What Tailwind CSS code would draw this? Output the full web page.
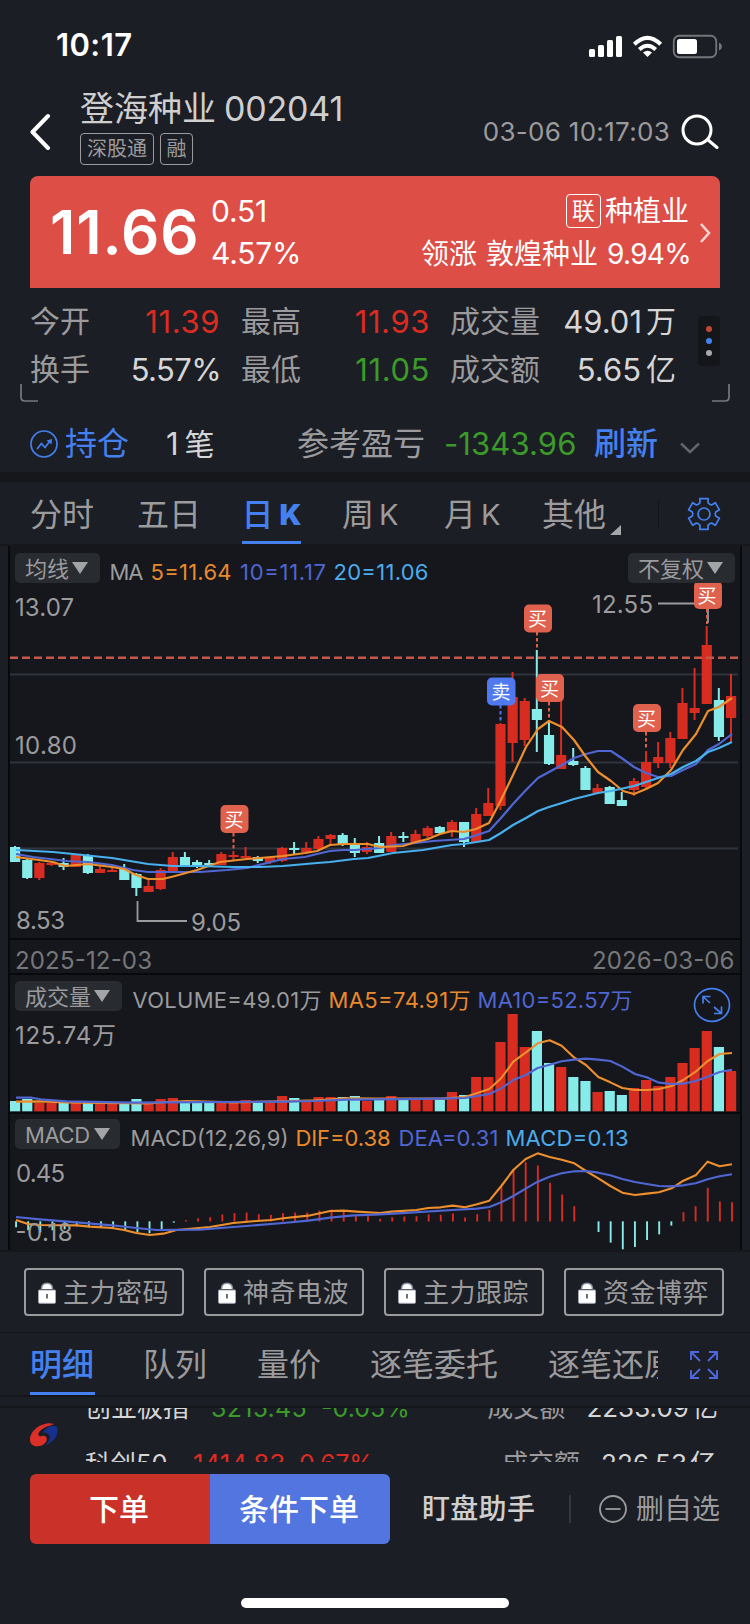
<!DOCTYPE html>
<html lang="zh-CN">
<head>
<meta charset="utf-8">
<title>登海种业 002041</title>
<script src="https://cdn.jsdelivr.net/npm/@tailwindcss/browser@4"></script>
</head>
<body class="bg-[#1b1e25]">
<div class="w-[750px] h-[1624px] overflow-hidden flex flex-col bg-[#1b1e25] text-[#9b9b9d] font-['Inter','Noto_Sans_CJK_SC',sans-serif] whitespace-nowrap leading-none">

  <!-- status bar -->
  <div class="h-[88px] shrink-0 flex items-center pl-[56px] pr-[28px] pt-[3px]">
    <span class="-mt-[2px] text-[31px] font-semibold text-white tracking-[0.4px]">10:17</span>
    <svg class="ml-auto" width="136" height="26" viewBox="586 32 136 26">
      <g fill="#fff">
        <rect x="589" y="48" width="6" height="8" rx="1.5"/><rect x="598" y="44" width="6" height="12" rx="1.5"/><rect x="607" y="39" width="6" height="17" rx="1.5"/><rect x="616" y="35" width="6" height="21" rx="1.5"/>
        <path d="M647.500 56 L643 51.500 Q647.500 47.800 652 51.500 Z"/>
      </g>
      <g fill="none" stroke="#fff" stroke-width="4">
        <path d="M639.300 48.500 Q647.500 41 655.700 48.500"/><path d="M634.300 43.300 Q647.500 30.500 660.700 43.300"/>
      </g>
      <rect x="673.750" y="34.750" width="42.500" height="21.500" rx="5.500" fill="none" stroke="#74767a" stroke-width="1.800"/>
      <rect x="677" y="38" width="20" height="15" rx="2.500" fill="#fff"/>
      <path d="M719 41.500 Q722 43 722 45.500 Q722 48 719 49.500 Z" fill="#74767a"/>
    </svg>
  </div>

  <!-- header -->
  <div class="h-[88px] shrink-0 flex pl-[30px] pr-[31px]">
    <svg class="mt-[24px]" width="24" height="40" viewBox="0 0 24 40"><path d="M18 4 L2.500 20 L18 36" fill="none" stroke="#fff" stroke-width="4" stroke-linecap="round" stroke-linejoin="round"/></svg>
    <div class="ml-[26px] flex flex-col">
      <div class="mt-[1px] text-[34px] leading-[40px] text-[#cfcfd0] flex gap-[8px]">登海种业<span class="tracking-[-0.2px]">002041</span></div>
      <div class="mt-[4px] flex gap-[6px] text-[20px]">
        <span class="h-[32px] w-[74px] border border-[#9b9b9d] rounded-[4px] flex items-center justify-center">深股通</span>
        <span class="h-[32px] w-[33px] border border-[#9b9b9d] rounded-[4px] flex items-center justify-center">融</span>
      </div>
    </div>
    <div class="ml-auto mt-[26px] h-[36px] flex gap-[11px]">
      <span class="text-[26px] leading-[36px] tracking-[0.3px]">03-06 10:17:03</span>
      <svg width="38" height="36" viewBox="681 114 38 36"><g fill="none" stroke="#fff" stroke-width="3" stroke-linecap="round"><circle cx="697" cy="130" r="14"/><path d="M707.500 139.500 L717 147.500"/></g></svg>
    </div>
  </div>

  <!-- price card -->
  <div class="mx-[30px] h-[112px] shrink-0 rounded-t-[8px] bg-[#dd4e47] text-white flex">
    <div class="w-[160px] ml-[20px] text-[60px] font-semibold leading-[112px] tracking-[0.9px]">11.66</div>
    <div class="ml-[1px] pt-[14px] text-[30px] leading-[42px] tracking-[-0.2px]">
      <div>0.51</div><div>4.57%</div>
    </div>
    <div class="ml-auto pt-[14px] flex flex-col items-end text-[28px] leading-[42px]">
      <div class="flex items-center gap-[4px] mr-[2px]"><span class="w-[35px] h-[34px] border border-white rounded-[4px] text-[23px] flex items-center justify-center">联</span>种植业</div>
      <div class="mt-[1px] flex gap-[9px]"><span>领涨</span><span>敦煌种业</span><span class="tracking-[-0.7px]">9.94%</span></div>
    </div>
    <svg class="ml-[8px] mr-[9px] mt-[46px]" width="12" height="22" viewBox="0 0 12 22"><path d="M2 2 L10 11 L2 20" fill="none" stroke="#f6d5d3" stroke-width="2.500"/></svg>
  </div>

  <!-- key figures -->
  <div class="h-[116px] shrink-0 flex px-[20px]">
    <svg class="mt-[95px]" width="18" height="20" viewBox="0 0 18 20"><path d="M1 1 V14 Q1 18 5 18 H18" fill="none" stroke="#77787b" stroke-width="1.700"/></svg>
    <div class="-ml-[8px] mt-[9px] w-[646px] grid grid-cols-[60px_130px_21px_60px_129px_20px_91px_135px] auto-rows-[48px] items-center text-[30px]">
      <span>今开</span><span class="text-right text-[31px] tracking-[0.6px] text-[#dc2c22]">11.39</span><i></i><span>最高</span><span class="text-right text-[31px] tracking-[0.6px] text-[#dc2c22]">11.93</span><i></i><span>成交量</span><span class="flex justify-end gap-[4px] text-[#d6d6d7]"><b class="font-normal text-[31px]">49.01</b>万</span>
      <span>换手</span><span class="-mr-[1px] text-right text-[31px] tracking-[-0.6px] text-[#d6d6d7]">5.57%</span><i></i><span>最低</span><span class="text-right text-[31px] tracking-[0.6px] text-[#3c9a2a]">11.05</span><i></i><span>成交额</span><span class="flex justify-end gap-[5px] text-[#d6d6d7]"><b class="font-normal text-[31px]">5.65</b>亿</span>
    </div>
    <div class="ml-[22px] mt-[28px] w-[22px] h-[50px] rounded-[4px] bg-[#15161a] flex flex-col items-center justify-center gap-[6px]">
      <i class="size-[6px] rounded-full bg-[#bf4937]"></i><i class="size-[6px] rounded-full bg-[#4480ef]"></i><i class="size-[6px] rounded-full bg-[#a9a9ad]"></i>
    </div>
    <svg class="-ml-[8px] mt-[95px]" width="18" height="20" viewBox="0 0 18 20"><path d="M17 1 V14 Q17 18 13 18 H0" fill="none" stroke="#77787b" stroke-width="1.700"/></svg>
  </div>

  <!-- holdings -->
  <div class="h-[68px] shrink-0 flex items-center pl-[30px] pt-[12px] text-[32px] leading-[44px]">
    <svg width="28" height="28" viewBox="0 0 28 28" class="mt-[-1px]"><g fill="none" stroke="#4480ef" stroke-width="1.700"><circle cx="14" cy="14" r="13"/><path d="M7 19 L11.500 13.500 L15 17.500 L20 11"/></g><path d="M16.500 10.500 L22 9 L21.500 14.500 Z" fill="#4480ef"/></svg>
    <span class="ml-[7px] w-[101px] text-[#4480ef]">持仓</span>
    <span class="w-[131px] text-[30px] text-[#d6d6d7] flex gap-[6px]"><b class="font-normal text-[31px]">1</b><b class="font-normal">笔</b></span>
    <span class="w-[147px]">参考盈亏</span>
    <span class="w-[150px] text-[31px] tracking-[0.1px] text-[#3c9a2a]">-1343.96</span>
    <span class="w-[86px] font-medium text-[#4480ef]">刷新</span>
    <svg class="mt-[8px]" width="20" height="12" viewBox="0 0 20 12"><path d="M1 1.500 L10 10 L19 1.500" fill="none" stroke="#626468" stroke-width="2.500"/></svg>
  </div>
  <div class="h-[10px] shrink-0 bg-[#15171b]"></div>

  <!-- period tabs -->
  <div class="h-[62px] shrink-0 flex items-stretch pl-[30px] text-[32px] leading-[65px]">
    <span class="w-[107px]">分时</span>
    <span class="w-[105px]">五日</span>
    <span class="w-[59px] mr-[41px] border-b-3 border-[#4480ef] flex justify-center gap-[6px] font-bold text-[#4480ef]"><b class="font-medium">日</b><b class="text-[29px]">K</b></span>
    <span class="w-[102px] flex gap-[5px]"><b class="font-normal">周</b><b class="font-normal text-[29px]">K</b></span>
    <span class="w-[98px] flex gap-[5px]"><b class="font-normal">月</b><b class="font-normal text-[29px]">K</b></span>
    <span class="w-[68px]">其他</span>
    <svg class="mt-[43px]" width="11" height="10" viewBox="0 0 11 10"><path d="M0 10 H11 V0 Z" fill="#a6a7a9"/></svg>
    <i class="ml-[37px] mt-[18px] w-px h-[28px] bg-[#121418]"></i>
    <svg class="ml-[28px] mt-[15px]" width="34" height="34" viewBox="-17 -17 34 34"><g fill="none" stroke="#4480ef" stroke-width="1.700" stroke-linejoin="round"><circle r="6"/><path id="gear"/></g></svg>
  </div>
  <div class="h-[2px] shrink-0 bg-[#15171b]"></div>

  <!-- charts -->
  <div class="h-[704px] shrink-0 mx-[8px] border-x-2 border-[#08090c] bg-[#15171c] flex flex-col">
    <div class="h-[37px] shrink-0 flex pl-[5px] pr-[5px] pt-[7px]">
      <div class="w-[85px] h-[30px] rounded-[5px] bg-[#282b30] flex items-center pl-[10px] pt-[1px] gap-[3px] text-[22px]">均线<svg class="-mt-[1px]" width="16" height="12"><path d="M0 0 H16 L8 12 Z" fill="#a3a4a6"/></svg></div>
      <svg width="420" height="30" viewBox="100 553 420 30" font-size="22">
        <text x="109.500" y="580" fill="#9b9b9d" textLength="34">MA</text>
        <text x="150.500" y="580" fill="#ea8a2d" textLength="81">5=11.64</text>
        <text x="240" y="580" fill="#5066d2" textLength="86">10=11.17</text>
        <text x="333.500" y="580" fill="#4cabec" textLength="95">20=11.06</text>
      </svg>
      <div class="ml-auto w-[107px] h-[30px] rounded-[5px] bg-[#282b30] flex items-center pl-[10px] pt-[1px] gap-[3px] text-[22px]">不复权<svg class="-mt-[1px]" width="16" height="12"><path d="M0 0 H16 L8 12 Z" fill="#a3a4a6"/></svg></div>
    </div>
    <svg class="shrink-0" width="730" height="355" viewBox="10 583 730 355" fill="none" font-size="24">
      <path d="M10 674.500 H738 M10 762.500 H738 M10 848.500 H738" stroke="#30343c" stroke-width="2"/>
      <g fill="#9b9b9d">
        <text x="15" y="615.500" textLength="59">13.07</text><text x="15" y="753.500" textLength="62">10.80</text><text x="16" y="928.500" textLength="49">8.53</text>
        <text x="592" y="612.500" textLength="61">12.55</text><text x="191" y="930.500" textLength="50">9.05</text>
      </g>
      <path d="M658 603.500 H708 V623 M137.500 901 V921 H187" stroke="#9b9b9d" stroke-width="1.800"/>
      <g id="candles"></g>
      <path d="M10 657.700 H738" stroke="#c4594b" stroke-width="2.400" stroke-dasharray="8 4"/>
      <g stroke-width="2.200" stroke-linejoin="round">
        <polyline stroke="#5066d2" points="16,854 33,857 67,861 88,862 112,865 133,870 148,872 200,872 227,870 247,868 267,863 283,859 305,857 317,854 330,851 343,850 355,850 380,848 393,845 416,843 433,841 464,839 477,835 489,831 501,818 513,804 526,790 538,778 549,772 562,765 574,758 586,754 598,751 611,751 623,759 634,767 646,773 658,777 671,776 683,770 696,764 708,750 719,744 732,734"/>
        <polyline stroke="#ee8f2d" points="16,857 39,860 53,862 65,866 88,864 112,867 124,869 136,875 148,879 163,879 175,876 197,870 220,862 247,859 260,858 283,856 305,853 317,851 330,845 343,844 368,844 380,847 403,846 416,842 428,839 440,834 452,831 464,832 476,829 489,823 501,800 513,775 526,747 538,729 549,721 562,727 574,740 586,757 598,772 611,781 623,791 634,794 646,789 658,783 671,770 683,750 696,734 708,711 719,707 732,698"/>
        <polyline stroke="#48b0ee" points="16,850 53,852 83,855 112,858 136,862 148,864 173,866 200,866 233,867 260,867 283,866 317,863 330,862 354,859 368,858 393,853 423,850 452,845 464,844 489,840 501,833 513,825 526,818 538,811 549,807 562,803 574,799 586,796 598,793 611,791 634,786 646,782 658,778 671,774 683,767 696,761 708,752 719,748 732,742"/>
      </g>
      <g stroke="#df614c" stroke-width="2" stroke-dasharray="3.500 2.500"><path d="M233.500 833 V850 M537 632 V648 M549 702 V718 M646 732 V750 M707 609 V624"/><path d="M500.500 705 V722" stroke="#4f78ee"/></g>
      <g fill="#e0614d"><rect x="220.500" y="805" width="28" height="28" rx="5"/><rect x="524" y="604.500" width="28" height="28" rx="5"/><rect x="536" y="674" width="28" height="28" rx="5"/><rect x="633" y="704" width="28" height="28" rx="5"/><rect x="694" y="581" width="28" height="28" rx="5"/></g>
      <rect x="487" y="677.500" width="28.500" height="28" rx="5" fill="#5079f0"/>
      <g fill="#fff" font-size="19" text-anchor="middle"><text x="234" y="826.500">买</text><text x="537.500" y="626">买</text><text x="549.500" y="695.500">买</text><text x="646.500" y="725.500">买</text><text x="707" y="602.500">买</text><text x="501" y="699">卖</text></g>
    </svg>
    <div class="h-[37px] shrink-0 border-y-2 border-[#08090c] flex justify-between items-center px-[5px] pr-[3px]">
      <svg class="w-full" height="33" viewBox="15 940 722 33" font-size="24" fill="#75777a"><text x="15" y="969" textLength="137">2025-12-03</text><text x="592" y="969" textLength="142.500">2026-03-06</text></svg>
    </div>

    <div class="h-[37px] shrink-0 relative flex pl-[5px] pt-[6px]">
      <div class="w-[107px] h-[30px] rounded-[5px] bg-[#282b30] flex items-center pl-[10px] pt-[1px] gap-[3px] text-[22px]">成交量<svg class="-mt-[1px]" width="16" height="12"><path d="M0 0 H16 L8 12 Z" fill="#a3a4a6"/></svg></div>
      <svg width="520" height="32" viewBox="122 981 520 32" font-size="22">
        <text x="132.500" y="1007.500" fill="#9b9b9d" textLength="189">VOLUME=49.01万</text>
        <text x="328.500" y="1007.500" fill="#ea8a2d" textLength="142">MA5=74.91万</text>
        <text x="477.500" y="1007.500" fill="#5066d2" textLength="155">MA10=52.57万</text>
      </svg>
      <svg class="absolute left-[683px] top-[12px]" width="38" height="36" viewBox="-19 -18 38 36"><g fill="none" stroke="#4480ef" stroke-width="1.700"><ellipse rx="17.500" ry="16.300"/><path d="M-2 -2 L-8.500 -8 M-9 -1.500 V-8.500 H-1.500 M2 2 L9 8 M2 8.500 H9.500 V1.500"/></g></svg>
    </div>
    <svg class="shrink-0" width="730" height="100" viewBox="10 1012 730 100" fill="none">
      <text x="15" y="1044" fill="#9b9b9d" font-size="24" textLength="101">125.74万</text>
      <g id="volumes"></g>
      <g transform="translate(0 960) scale(.33333)" stroke-width="6.300" stroke-linejoin="round">
        <polyline stroke="#ee8f2d" points="48,425 120,424 200,427 300,429 445,430 500,426 560,423 700,427 850,424 950,421 1040,415 1125,416 1325,416 1395,411 1430,400 1468,387 1504,354 1540,305 1577,278 1613,250 1649,241 1685,257 1723,293 1758,315 1795,351 1831,367 1867,384 1905,390 1940,390 1977,387 2015,378 2050,360 2087,335 2123,303 2159,282 2196,279"/>
        <polyline stroke="#5066d2" points="48,413 95,413 130,419 200,424 400,428 500,427 850,425 950,423 1040,419 1125,418 1325,416 1395,414 1468,402 1504,385 1540,360 1577,345 1613,324 1649,314 1685,304 1723,299 1758,296 1795,299 1831,303 1867,320 1905,342 1940,352 1977,368 2015,372 2050,371 2087,363 2123,350 2159,336 2196,329"/>
      </g>
    </svg>
    <div class="h-[38px] shrink-0 border-t-2 border-[#08090c] flex pl-[5px] pt-[5px]">
      <div class="w-[105px] mr-[1px] h-[30px] rounded-[5px] bg-[#282b30] flex items-center pl-[10px] pt-[1px] gap-[4px] text-[22px] tracking-[-0.4px]">MACD<svg class="-mt-[1px]" width="16" height="12"><path d="M0 0 H16 L8 12 Z" fill="#a3a4a6"/></svg></div>
      <svg width="520" height="31" viewBox="121 1119 520 31" font-size="22">
        <text x="130.500" y="1145.500" fill="#9b9b9d" textLength="158">MACD(12,26,9)</text>
        <text x="295.500" y="1145.500" fill="#ea8a2d" textLength="95">DIF=0.38</text>
        <text x="398.500" y="1145.500" fill="#5066d2" textLength="100">DEA=0.31</text>
        <text x="505.500" y="1145.500" fill="#4cabec" textLength="123">MACD=0.13</text>
      </svg>
    </div>
    <svg class="shrink-0" width="730" height="100" viewBox="10 1150 730 100" fill="none">
      <g id="macd"></g>
      <g transform="translate(0 960) scale(.33333)" stroke-width="6.300" stroke-linejoin="round">
        <polyline stroke="#ee8f2d" points="48,780 84,792 120,795 230,796 270,800 336,804 372,810 409,819 450,825 490,821 530,810 630,801 700,789 770,783 815,780 850,775 925,767 991,753 1030,752 1070,755 1140,759 1175,755 1249,750 1285,744 1322,742 1358,737 1395,742 1431,733 1468,722 1504,678 1540,630 1577,597 1613,580 1649,591 1685,599 1723,610 1758,633 1795,655 1831,678 1867,698 1905,705 1940,701 1977,697 2015,685 2050,662 2087,646 2123,605 2159,619 2196,613"/>
        <polyline stroke="#5066d2" points="48,771 120,778 230,787 336,796 409,804 470,810 600,809 700,801 850,789 925,782 991,773 1060,766 1125,764 1195,760 1358,750 1431,746 1468,741 1504,727 1540,708 1577,686 1613,665 1649,650 1685,640 1723,634 1758,633 1795,638 1831,646 1867,657 1905,666 1940,672 1977,678 2015,679 2050,676 2087,670 2123,658 2159,649 2196,643"/>
      </g>
      <g fill="#9b9b9d" font-size="24"><text x="16" y="1181.500" textLength="49">0.45</text><text x="15.500" y="1240.500" textLength="57">-0.18</text></g>
    </svg>
  </div>
  <div class="h-[2px] shrink-0 bg-[#15171b]"></div>

  <!-- locked indicators -->
  <div class="h-[81px] shrink-0 flex gap-[20px] px-[24px] pt-[16px] text-[26px] tracking-[0.5px] border-b border-[#121418]">
    <div class="w-[160px] h-[48px] border-2 border-[#9b9b9d] rounded-[4px] flex items-center pl-[12px] pt-[1px] gap-[7px]"><svg width="18" height="22" viewBox="0 0 18 22"><use href="#lock"/></svg>主力密码</div>
    <div class="w-[160px] h-[48px] border-2 border-[#9b9b9d] rounded-[4px] flex items-center pl-[12px] pt-[1px] gap-[7px]"><svg width="18" height="22" viewBox="0 0 18 22"><use href="#lock"/></svg>神奇电波</div>
    <div class="w-[160px] h-[48px] border-2 border-[#9b9b9d] rounded-[4px] flex items-center pl-[12px] pt-[1px] gap-[7px]"><svg width="18" height="22" viewBox="0 0 18 22"><use href="#lock"/></svg>主力跟踪</div>
    <div class="w-[160px] h-[48px] border-2 border-[#9b9b9d] rounded-[4px] flex items-center pl-[12px] pt-[1px] gap-[7px]"><svg width="18" height="22" viewBox="0 0 18 22"><g id="lock"><path d="M3.500 7 C3.500 3 6 1.200 9 1.200 C12 1.200 14.500 3 14.500 7" fill="#fff" stroke="#8d90a0" stroke-width="1.500"/><rect x="0.500" y="8" width="17" height="13.300" rx="1" fill="#fff" stroke="#a5a7b3"/><rect x="8" y="12" width="2" height="4.500" fill="#6b6e7c"/></g></svg>资金博弈</div>
  </div>

  <!-- detail tabs -->
  <div class="h-[62px] shrink-0 flex pl-[30px] text-[32px] leading-[63px]">
    <span class="w-[65px] mr-[48px] border-b-3 border-[#4480ef] font-medium text-[#4480ef]">明细</span>
    <span class="w-[114px]">队列</span>
    <span class="w-[113px]">量价</span>
    <span class="w-[178px]">逐笔委托</span>
    <span class="w-[110px] overflow-hidden">逐笔还原</span>
    <svg class="ml-[31px] mt-[17px]" width="30" height="30" viewBox="0 0 30 30"><path d="M11 11 L2 2 M2 10 V2 H10 M19 11 L28 2 M20 2 H28 V10 M11 19 L2 28 M2 20 V28 H10 M19 19 L28 28 M20 28 H28 V20" fill="none" stroke="#4f68dd" stroke-width="1.900"/></svg>
  </div>
  <div class="h-[13px] shrink-0 border-y-2 border-[#14161a]"></div>

  <!-- index ticker -->
  <div class="h-[54px] shrink-0 overflow-hidden flex text-[26px]">
    <svg class="ml-[29px] mt-[14px]" width="30" height="26" viewBox="0 0 30 26"><path d="M25 2 C17 -1 1 6 1 18 C1 26 13 26 17 20 C19 16 17 13 13 14 C9 15 8 12 11 9 C15 5 20 4 25 2 Z" fill="#dc2f28"/><path d="M14 11 C17 5 24 2 28 5 C31 12 24 22 14 24 C19 22 22 17 20 13 C19 11 16 10 14 11 Z" fill="#16308d"/></svg>
    <div class="ml-[26px] w-[633px] -mt-[28px]">
      <div class="h-[56px] flex items-center"><span class="w-[126px] text-[#d6d6d7]">创业板指</span><span class="w-[110px] text-[25px] tracking-[0.3px] text-[#3c9a2a]">3215.45</span><span class="text-[25px] text-[#3c9a2a]">-0.05%</span><span class="ml-auto mr-[21px]">成交额</span><span class="flex gap-[3px] text-[#d6d6d7]">2233.09<b class="font-normal">亿</b></span></div>
      <div class="h-[56px] flex items-center pr-[2px]"><span class="w-[108px] text-[25.500px] text-[#d6d6d7]">科创50</span><span class="w-[106px] text-[#dc2c22]">1414.83</span><span class="text-[25px] tracking-[-0.3px] text-[#dc2c22]">0.67%</span><span class="ml-auto mr-[21px]">成交额</span><span class="flex gap-[3px] text-[#d6d6d7]">226.53<b class="font-normal">亿</b></span></div>
    </div>
  </div>

  <!-- actions -->
  <div class="h-[82px] shrink-0 pt-[12px] flex pl-[30px] text-[30px] font-medium leading-[70px]">
    <div class="w-[180px] pr-[2px] rounded-l-[6px] bg-[#ca3229] text-white text-center">下单</div>
    <div class="w-[180px] pr-[2px] rounded-r-[6px] bg-[#5275e0] text-white text-center">条件下单</div>
    <span class="ml-[32px] w-[147px] text-[28px] tracking-[0.3px] text-[#cfcfd0]">盯盘助手</span>
    <i class="mt-[21px] w-[2px] h-[28px] bg-[#34373e]"></i>
    <svg class="ml-[28px] mt-[21px]" width="28" height="28" viewBox="0 0 28 28"><g fill="none" stroke="#9b9b9d" stroke-width="1.800"><circle cx="14" cy="14" r="13"/><path d="M6.500 14 H21.500"/></g></svg>
    <span class="ml-[9px] text-[28px] font-normal">删自选</span>
  </div>
  <div class="mt-[54px] mx-auto w-[268px] h-[10px] shrink-0 rounded-full bg-white"></div>
</div>

<script>
const RED = '#d82c20', CYAN = '#87ebe9';
// side, wick top, body top, body bottom, wick bottom
const candles = `c 846 847 862 862|c 859 860 878 879|r 862 863 878 880|r 861 863 865 866|c 858 863 867 870|r 855 855 867 867|c 854 856 873 874|r 865 869 873 873|r 867 870 872 872|c 864 868 880 880|c 873 874 888 896|r 880 886 892 892|r 868 870 889 890|r 852 857 871 871|c 852 857 865 866|c 860 862 865 868|c 860 863 865 866|r 852 854 865 865|r 851 855 857 861|r 847 856 858 858|c 856 857 861 863|r 857 858 862 864|r 847 848 861 862|c 842 848 850 854|r 842 848 852 853|r 836 839 849 850|r 834 835 839 844|c 833 835 845 846|c 838 844 853 857|r 842 847 852 854|c 836 843 853 853|r 832 836 852 852|c 832 836 838 842|r 830 834 842 842|r 826 828 836 838|c 826 827 833 834|r 820 822 832 837|c 822 822 842 847|r 808 814 842 842|r 788 803 816 816|r 723 724 806 810|r 672 697 743 762|r 698 701 740 746|c 650 709 720 752|c 720 735 764 765|r 680 755 769 769|c 748 761 765 766|c 766 768 790 790|r 784 788 793 794|c 786 787 804 804|c 792 800 806 806|r 778 781 790 796|r 751 762 787 789|r 742 757 763 768|r 732 738 763 768|r 688 703 739 739|r 668 708 713 720|r 626 645 704 704|c 688 700 737 741|r 674 696 718 743`.split('|').map(s => s.split(' '));
const vol = [1101,1099,1103,1103,1103,1103,1101,1103,1103,1103,1099,1103,1099,1098,1102,1103,1103,1103,1103,1100,1103,1103,1096,1098,1102,1097,1097,1097,1096,1101,1099,1096,1100,1100,1099,1100,1092,1095,1077,1077,1042,1014,1047,1031,1063,1067,1077,1081,1092,1091,1095,1088,1080,1086,1077,1063,1048,1031,1047,1071];
const macd = [-6,-9,-11,-9,-8,-5,-6,-6,-6,-9,-11,-12,-8,-1.3,1.3,3.3,4.3,7,8.3,9,7.3,6.7,8.3,9,9,11,12,9.7,6,5.3,2.5,4.3,5,5.3,7,6.7,8,4,7.3,11.7,34.3,51.3,59.3,56,38.7,27,15.3,0,-10.7,-21.3,-28,-25.7,-18.7,-13,-4.3,9.3,15.3,33.7,20,19.3];
const cx = k => 15.2 + k * 12.135;
const box = (x, y, w, h, f) => `<rect x="${x.toFixed(2)}" y="${y}" width="${w}" height="${h}" fill="${f}"/>`;
document.getElementById('candles').innerHTML = candles.map(([s, a, b, c, d], k) => {
  const f = s === 'r' ? RED : CYAN;
  return box(cx(k) - 1.2, a, 2, d - a, f) + box(cx(k) - 5.2, b, 10.2, c - b, f);
}).join('');
document.getElementById('volumes').innerHTML = vol.map((t, k) => box(cx(k) - 5.2, t, 10.2, 1111.3 - t, candles[k][0] === 'r' ? RED : CYAN)).join('');
document.getElementById('macd').innerHTML = macd.map((v, k) => box(cx(k) - .1, v > 0 ? 1221.5 - v : 1221.3, 1.9, Math.abs(v), v > 0 ? RED : CYAN)).join('');

// six-tooth gear outline
let g = '';
for (let i = 0; i < 6; i++) {
  [[-15, 16], [15, 16], [20, 11.8], [30, 11.3], [40, 11.8]].forEach(([a, r], j) => {
    const t = (i * 60 + a - 90) * Math.PI / 180;
    g += (i + j ? 'L' : 'M') + (r * Math.cos(t)).toFixed(2) + ' ' + (r * Math.sin(t)).toFixed(2);
  });
}
document.getElementById('gear').setAttribute('d', g + 'Z');
</script>
</body>
</html>
